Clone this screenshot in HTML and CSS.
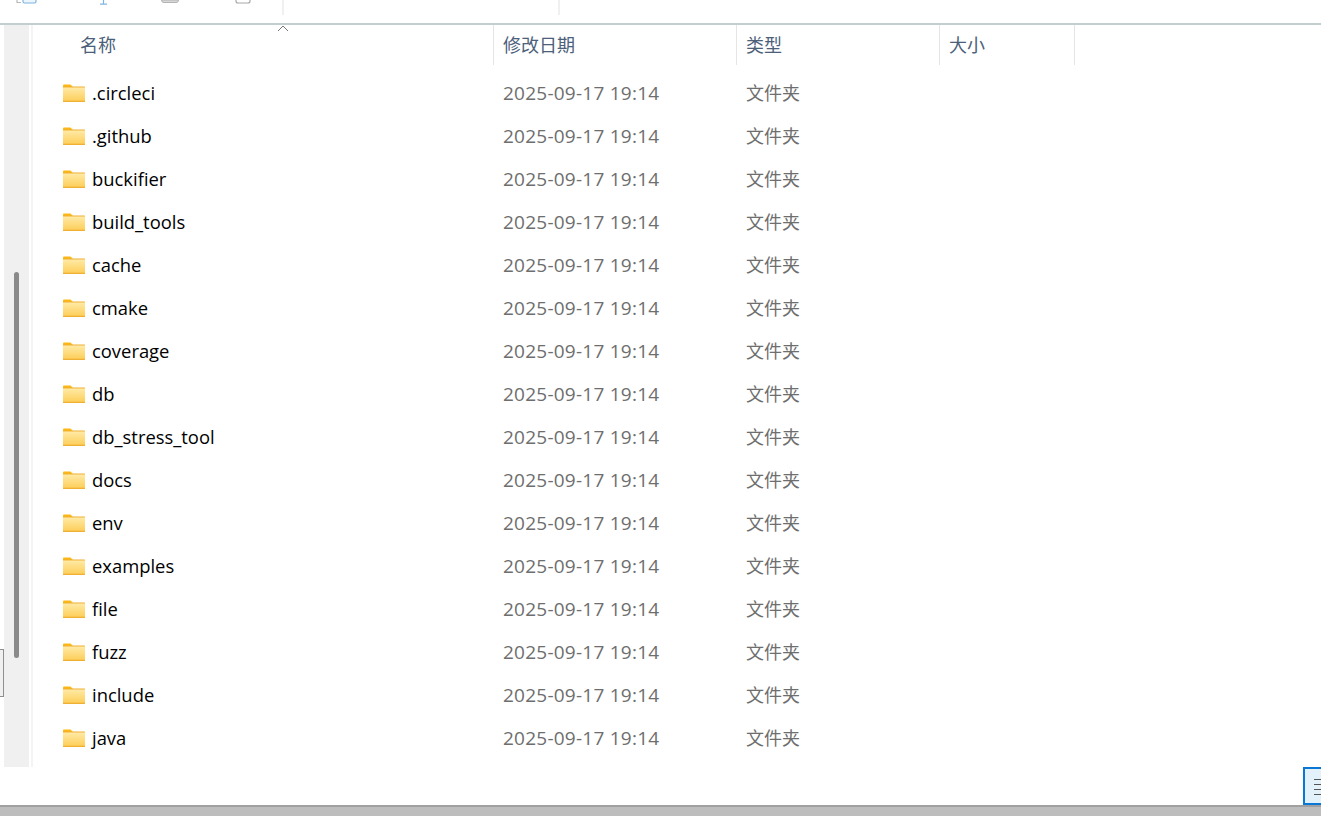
FILE: index.html
```html
<!DOCTYPE html>
<html lang="zh-CN">
<head>
<meta charset="utf-8">
<title>文件资源管理器</title>
<link rel="stylesheet" href="styles.css">
</head>
<body>
<div class="window">
  <div class="toolbar">
    <svg class="tool tool-a" width="22" height="4" viewBox="0 0 22 4"><path d="M1 0v2.500h4" fill="none" stroke="#b8b8b8" stroke-width="1.200"/><path d="M7 0v1.500q0 1.500 1.500 1.500h10q1.500 0 1.500-1.500v-1.500" fill="#eef6fc" stroke="#7db4e2" stroke-width="1.200"/></svg>
    <svg class="tool tool-b" width="12" height="5" viewBox="0 0 12 5"><path d="M5.500 0v4M2 4.200h7" fill="none" stroke="#7db4e2" stroke-width="1.200"/></svg>
    <svg class="tool tool-c" width="18" height="3" viewBox="0 0 18 3"><path d="M0.500 0q0 2.500 2.500 2.500h12q2.500 0 2.500-2.500z" fill="#d8d8d8" stroke="#b4b4b4"/></svg>
    <svg class="tool tool-d" width="16" height="4" viewBox="0 0 16 4"><path d="M1 0v1q0 2 2 2h10q2 0 2-2v-1" fill="#fff" stroke="#a8a8a8" stroke-width="1.200"/></svg>
    <span class="tool-sep sep-a"></span>
    <span class="tool-sep sep-b"></span>
  </div>
  <div class="body">
    <div class="edge"><span class="handle"></span></div>
    <div class="rail"><span class="thumb"></span></div>
    <div class="rail-line"></div>
    <main class="list">
      <div class="sort-arrow"><svg width="12" height="7" viewBox="0 0 12 7"><path d="M1 6l5-5 5 5" fill="none" stroke="#777" stroke-width="1"/></svg></div>
      <div class="head">
        <div class="hcell hname">名称</div>
        <div class="hcell">修改日期</div>
        <div class="hcell">类型</div>
        <div class="hcell">大小</div>
        <div class="hrest"></div>
      </div>
      <div class="rows" id="rows">
        <div class="row"><div class="name"><svg class="folder"><use href="#fld"/></svg>.circleci</div><div class="date">2025-09-17 19:14</div><div class="type">文件夹</div></div>
        <div class="row"><div class="name"><svg class="folder"><use href="#fld"/></svg>.github</div><div class="date">2025-09-17 19:14</div><div class="type">文件夹</div></div>
        <div class="row"><div class="name"><svg class="folder"><use href="#fld"/></svg>buckifier</div><div class="date">2025-09-17 19:14</div><div class="type">文件夹</div></div>
        <div class="row"><div class="name"><svg class="folder"><use href="#fld"/></svg>build_tools</div><div class="date">2025-09-17 19:14</div><div class="type">文件夹</div></div>
        <div class="row"><div class="name"><svg class="folder"><use href="#fld"/></svg>cache</div><div class="date">2025-09-17 19:14</div><div class="type">文件夹</div></div>
        <div class="row"><div class="name"><svg class="folder"><use href="#fld"/></svg>cmake</div><div class="date">2025-09-17 19:14</div><div class="type">文件夹</div></div>
        <div class="row"><div class="name"><svg class="folder"><use href="#fld"/></svg>coverage</div><div class="date">2025-09-17 19:14</div><div class="type">文件夹</div></div>
        <div class="row"><div class="name"><svg class="folder"><use href="#fld"/></svg>db</div><div class="date">2025-09-17 19:14</div><div class="type">文件夹</div></div>
        <div class="row"><div class="name"><svg class="folder"><use href="#fld"/></svg>db_stress_tool</div><div class="date">2025-09-17 19:14</div><div class="type">文件夹</div></div>
        <div class="row"><div class="name"><svg class="folder"><use href="#fld"/></svg>docs</div><div class="date">2025-09-17 19:14</div><div class="type">文件夹</div></div>
        <div class="row"><div class="name"><svg class="folder"><use href="#fld"/></svg>env</div><div class="date">2025-09-17 19:14</div><div class="type">文件夹</div></div>
        <div class="row"><div class="name"><svg class="folder"><use href="#fld"/></svg>examples</div><div class="date">2025-09-17 19:14</div><div class="type">文件夹</div></div>
        <div class="row"><div class="name"><svg class="folder"><use href="#fld"/></svg>file</div><div class="date">2025-09-17 19:14</div><div class="type">文件夹</div></div>
        <div class="row"><div class="name"><svg class="folder"><use href="#fld"/></svg>fuzz</div><div class="date">2025-09-17 19:14</div><div class="type">文件夹</div></div>
        <div class="row"><div class="name"><svg class="folder"><use href="#fld"/></svg>include</div><div class="date">2025-09-17 19:14</div><div class="type">文件夹</div></div>
        <div class="row"><div class="name"><svg class="folder"><use href="#fld"/></svg>java</div><div class="date">2025-09-17 19:14</div><div class="type">文件夹</div></div>
      </div>
    </main>
  </div>
  <div class="status">
    <div class="view-btn"><span></span><span></span><span></span><span></span></div>
  </div>
  <div class="bottom"></div>
</div>
<svg class="defs" width="0" height="0">
  <defs>
    <linearGradient id="fg" x1="0" y1="0" x2="0" y2="1">
      <stop offset="0" stop-color="#ffeaa6"/>
      <stop offset="1" stop-color="#fdcf5c"/>
    </linearGradient>
    <symbol id="fld" viewBox="0 0 22 18">
      <path d="M0 1.500q0-1 1-1h6.500l2.500 2.500h-10z" fill="#fbb714"/>
      <rect x="0" y="2.500" width="22" height="15.500" rx="0.500" fill="#efb034"/>
      <rect x="0" y="3.500" width="22" height="13.200" fill="url(#fg)"/>
    </symbol>
  </defs>
</svg>
</body>
</html>
```
FILE: styles.css
```css
* { box-sizing: border-box; }
html, body { margin: 0; padding: 0; background: #fff; }
body { overflow: hidden; font-family: "Open Sans", "Noto Sans CJK SC", sans-serif; }
.window { width: 1321px; height: 816px; display: flex; flex-direction: column; overflow: hidden; }
.defs { position: absolute; }

.toolbar { height: 25px; flex: none; display: flex; align-items: flex-start; border-bottom: 2px solid #c2cfcf; }
.tool { display: block; flex: none; }
.tool-a { margin-left: 16px; }
.tool-b { margin-left: 60px; }
.tool-c { margin-left: 51px; }
.tool-d { margin-left: 56px; }
.tool-sep { width: 2px; height: 15px; background: #f0f0f0; flex: none; }
.sep-a { margin-left: 31px; }
.sep-b { margin-left: 274px; }

.body { height: 742px; flex: none; display: flex; align-items: stretch; }
.edge { width: 4px; flex: none; padding-top: 624px; }
.handle { display: block; width: 4px; height: 48px; background: #f0f0f0; border: 1px solid #8f8f8f; border-left: 0; }
.rail { width: 25px; flex: none; background: #f0f0f0; padding: 247px 0 0 10px; }
.thumb { display: block; width: 5px; height: 386px; border-radius: 3px; background: #8a8a8a; }
.rail-line { width: 2px; margin: 0 1px 0 2px; flex: none; background: #f4f4f4; }

.list { flex: 1; position: relative; min-width: 0; }
.sort-arrow { position: absolute; left: 243px; top: 0; line-height: 0; }
.head { display: grid; grid-template-columns: 460px 243px 203px 135px 1fr; height: 40px; color: #4c607a; font-size: 18px; font-family: "Noto Sans CJK SC", sans-serif; }
.hcell { border-right: 1px solid #e5e5e5; padding-left: 9px; line-height: 39px; white-space: nowrap; }
.hname { padding-left: 46px; }

.rows { padding-top: 6px; }
.row { display: grid; grid-template-columns: 460px 243px 203px; height: 43px; align-items: center; font-size: 18px; white-space: nowrap; }
.name { display: flex; align-items: center; padding-left: 29px; color: #000; font-size: 18.400px; }
.folder { width: 22px; height: 18px; margin-right: 7px; flex: none; }
.date { padding-left: 9px; color: #6e6e6e; font-size: 19px; letter-spacing: 0.240px; }
.type { padding-left: 9px; padding-bottom: 2px; color: #6e6e6e; font-family: "Noto Sans CJK SC", sans-serif; }

.status { height: 38px; flex: none; display: flex; justify-content: flex-end; }
.view-btn { width: 18px; height: 38px; background: #e3f1fa; border: 2px solid #0a78d4; border-right: 0; padding: 10px 0 0 9px; display: flex; flex-direction: column; gap: 4px; }
.view-btn span { display: block; height: 1px; background: #555; }

.bottom { flex: 1; background: #bdbdbd; border-top: 2px solid #a0a0a0; }
```
